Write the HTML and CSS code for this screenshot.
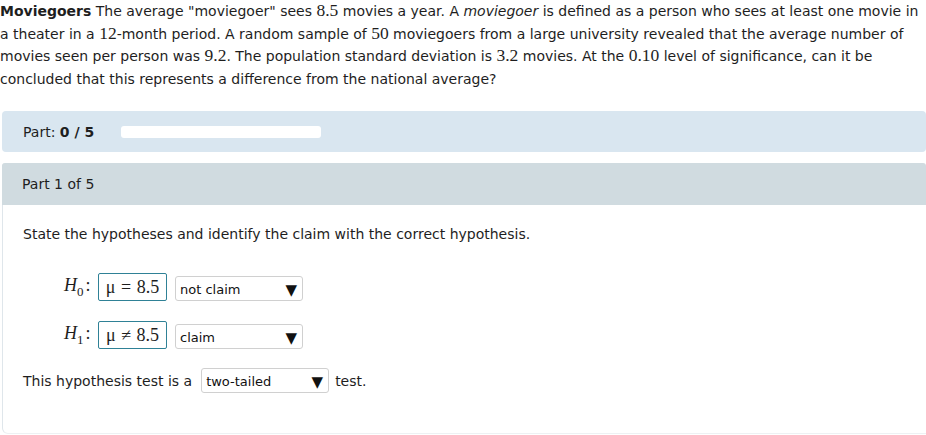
FILE: index.html
```html
<!DOCTYPE html>
<html>
<head>
<meta charset="utf-8">
<link rel="stylesheet" href="styles.css">
</head>
<body>
<p class="problem">
  <span class="ln"><b>Moviegoers</b> The average "moviegoer" sees <span class="m">8.5</span> movies a year. A <i>moviegoer</i> is defined as a person who sees at least one movie in</span>
  <span class="ln">a theater in a <span class="m">12</span>-month period. A random sample of <span class="m">50</span> moviegoers from a large university revealed that the average number of</span>
  <span class="ln">movies seen per person was <span class="m">9.2</span>. The population standard deviation is <span class="m">3.2</span> movies. At the <span class="m">0.10</span> level of significance, can it be</span>
  <span class="ln">concluded that this represents a difference from the national average?</span>
</p>

<div class="progress">
  <span>Part: <b>0 / 5</b></span>
  <div class="track"></div>
</div>

<div class="part">
  <div class="part-head">Part 1 of 5</div>
  <div class="part-body">
    <p class="prompt">State the hypotheses and identify the claim with the correct hypothesis.</p>
    <div class="hyp">
      <span class="hlabel"><i>H</i><sub>0</sub>:</span>
      <span class="ans">μ = 8.5</span>
      <span class="sel"><span>not claim</span><span class="arr">▼</span></span>
    </div>
    <div class="hyp">
      <span class="hlabel"><i>H</i><sub>1</sub>:</span>
      <span class="ans">μ ≠ 8.5</span>
      <span class="sel"><span>claim</span><span class="arr">▼</span></span>
    </div>
    <div class="tail">
      <span>This hypothesis test is a</span>
      <span class="sel wide"><span>two-tailed</span><span class="arr">▼</span></span>
      <span>test.</span>
    </div>
  </div>
</div>
</body>
</html>
```

FILE: styles.css
```css
html, body {
  margin: 0;
  padding: 0;
  background: #fff;
}
body {
  font-family: "DejaVu Sans", Verdana, sans-serif;
  font-size: 14px;
  color: #1e1e1e;
  width: 926px;
  overflow: hidden;
}
.problem {
  margin: 0;
  line-height: 22.5px;
}
.ln {
  display: block;
  white-space: nowrap;
}
.m {
  font-family: "Liberation Serif", "Times New Roman", serif;
  font-size: 17.5px;
  line-height: 1;
}
.progress {
  margin: 21px 0 0 2px;
  height: 41px;
  background: #d9e6f0;
  border-radius: 4px;
  display: flex;
  align-items: center;
  padding-left: 21px;
}
.track {
  width: 200px;
  height: 12px;
  background: #fff;
  border-radius: 3px;
  margin-left: 27px;
}
.part {
  margin: 11px 0 0 2px;
  height: 270px;
  border-left: 1px solid #dfe6eb;
  border-bottom: 1px solid #eef1f3;
  border-radius: 4px 0 0 6px;
}
.part-head {
  height: 42px;
  background: #d0dbe0;
  display: flex;
  align-items: center;
  padding-left: 20px;
  border-radius: 3px 3px 0 0;
  margin-left: -1px;
}
.part-body {
  padding: 20px 0 0 20px;
}
.prompt {
  margin: 0 0 30px;
  line-height: 18px;
}
.hyp {
  display: flex;
  align-items: center;
  margin-left: 41px;
  height: 28px;
  margin-bottom: 20px;
}
.hlabel {
  font-family: "Liberation Serif", "Times New Roman", serif;
  font-size: 18px;
  width: 34px;
}
.hlabel sub {
  font-size: 13px;
  font-style: normal;
  vertical-align: -5px;
  margin-right: 2px;
}
.ans {
  font-family: "Liberation Serif", "Times New Roman", serif;
  font-size: 18px;
  border: 1px solid #2f8196;
  border-radius: 2px;
  height: 26px;
  width: 67px;
  display: flex;
  align-items: center;
  justify-content: center;
  word-spacing: 1px;
}
.sel {
  display: flex;
  align-items: center;
  justify-content: space-between;
  box-sizing: border-box;
  width: 128px;
  height: 25px;
  border: 1px solid #d0d0d0;
  border-radius: 3px;
  padding: 2px 5px 0 4px;
  margin-left: 8px;
  align-self: flex-end;
  font-family: "DejaVu Sans", Verdana, sans-serif;
  font-size: 13px;
  color: #111;
}
.arr {
  font-size: 15px;
  color: #111;
}
.tail {
  display: flex;
  align-items: center;
  margin-top: -1px;
}
.tail .sel {
  margin: 0 6px 0 9px;
  align-self: center;
}
```
